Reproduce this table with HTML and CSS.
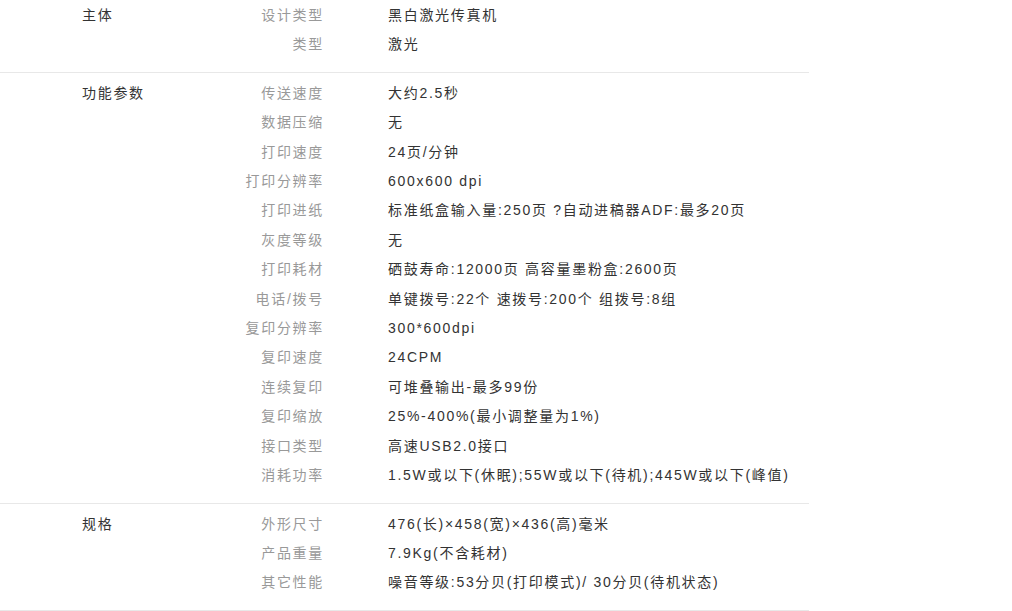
FILE: index.html
```html
<!DOCTYPE html>
<html lang="zh-CN">

<head>
    <meta charset="UTF-8">
    <meta name="viewport" content="width=device-width, initial-scale=1.0">
    <title>规格参数</title>
    <link rel="stylesheet" href="styles.css">
</head>

<body>
    <div class="spec">
        <div class="group">
            <div class="group-name">主体</div>
            <dl class="items">
                <div class="item"><dt>设计类型</dt><dd>黑白激光传真机</dd></div>
                <div class="item"><dt>类型</dt><dd>激光</dd></div>
            </dl>
        </div>
        <div class="group">
            <div class="group-name">功能参数</div>
            <dl class="items">
                <div class="item"><dt>传送速度</dt><dd>大约2.5秒</dd></div>
                <div class="item"><dt>数据压缩</dt><dd>无</dd></div>
                <div class="item"><dt>打印速度</dt><dd>24页/分钟</dd></div>
                <div class="item"><dt>打印分辨率</dt><dd>600x600 dpi</dd></div>
                <div class="item"><dt>打印进纸</dt><dd>标准纸盒输入量:250页 ?自动进稿器ADF:最多20页</dd></div>
                <div class="item"><dt>灰度等级</dt><dd>无</dd></div>
                <div class="item"><dt>打印耗材</dt><dd>硒鼓寿命:12000页 高容量墨粉盒:2600页</dd></div>
                <div class="item"><dt>电话/拨号</dt><dd>单键拨号:22个 速拨号:200个 组拨号:8组</dd></div>
                <div class="item"><dt>复印分辨率</dt><dd>300*600dpi</dd></div>
                <div class="item"><dt>复印速度</dt><dd>24CPM</dd></div>
                <div class="item"><dt>连续复印</dt><dd>可堆叠输出-最多99份</dd></div>
                <div class="item"><dt>复印缩放</dt><dd>25%-400%(最小调整量为1%)</dd></div>
                <div class="item"><dt>接口类型</dt><dd>高速USB2.0接口</dd></div>
                <div class="item"><dt>消耗功率</dt><dd>1.5W或以下(休眠);55W或以下(待机);445W或以下(峰值)</dd></div>
            </dl>
        </div>
        <div class="group">
            <div class="group-name">规格</div>
            <dl class="items">
                <div class="item"><dt>外形尺寸</dt><dd>476(长)×458(宽)×436(高)毫米</dd></div>
                <div class="item"><dt>产品重量</dt><dd>7.9Kg(不含耗材)</dd></div>
                <div class="item"><dt>其它性能</dt><dd>噪音等级:53分贝(打印模式)/ 30分贝(待机状态)</dd></div>
            </dl>
        </div>
    </div>
</body>

</html>
```

FILE: styles.css
```css
* {
    margin: 0;
    padding: 0;
    box-sizing: border-box;
}

body {
    background-color: #fff;
    font-family: "Liberation Sans", "Noto Sans CJK SC", sans-serif;
    font-size: 14px;
    letter-spacing: 1.7px;
    color: #333;
}

.spec {
    width: 809px;
}

.group {
    display: flex;
    padding: 6px 0 12px 82px;
    border-bottom: 1px solid #e8e8e8;
}

.group:first-child {
    padding-top: 1px;
}

.group-name {
    width: 160px;
    line-height: 29.4px;
    color: #333;
}

.items {
    flex: 1;
}

.item {
    display: flex;
    line-height: 29.4px;
}

.item dt {
    width: 82px;
    text-align: right;
    color: #999;
}

.item dd {
    margin-left: 64px;
    color: #333;
}
```
